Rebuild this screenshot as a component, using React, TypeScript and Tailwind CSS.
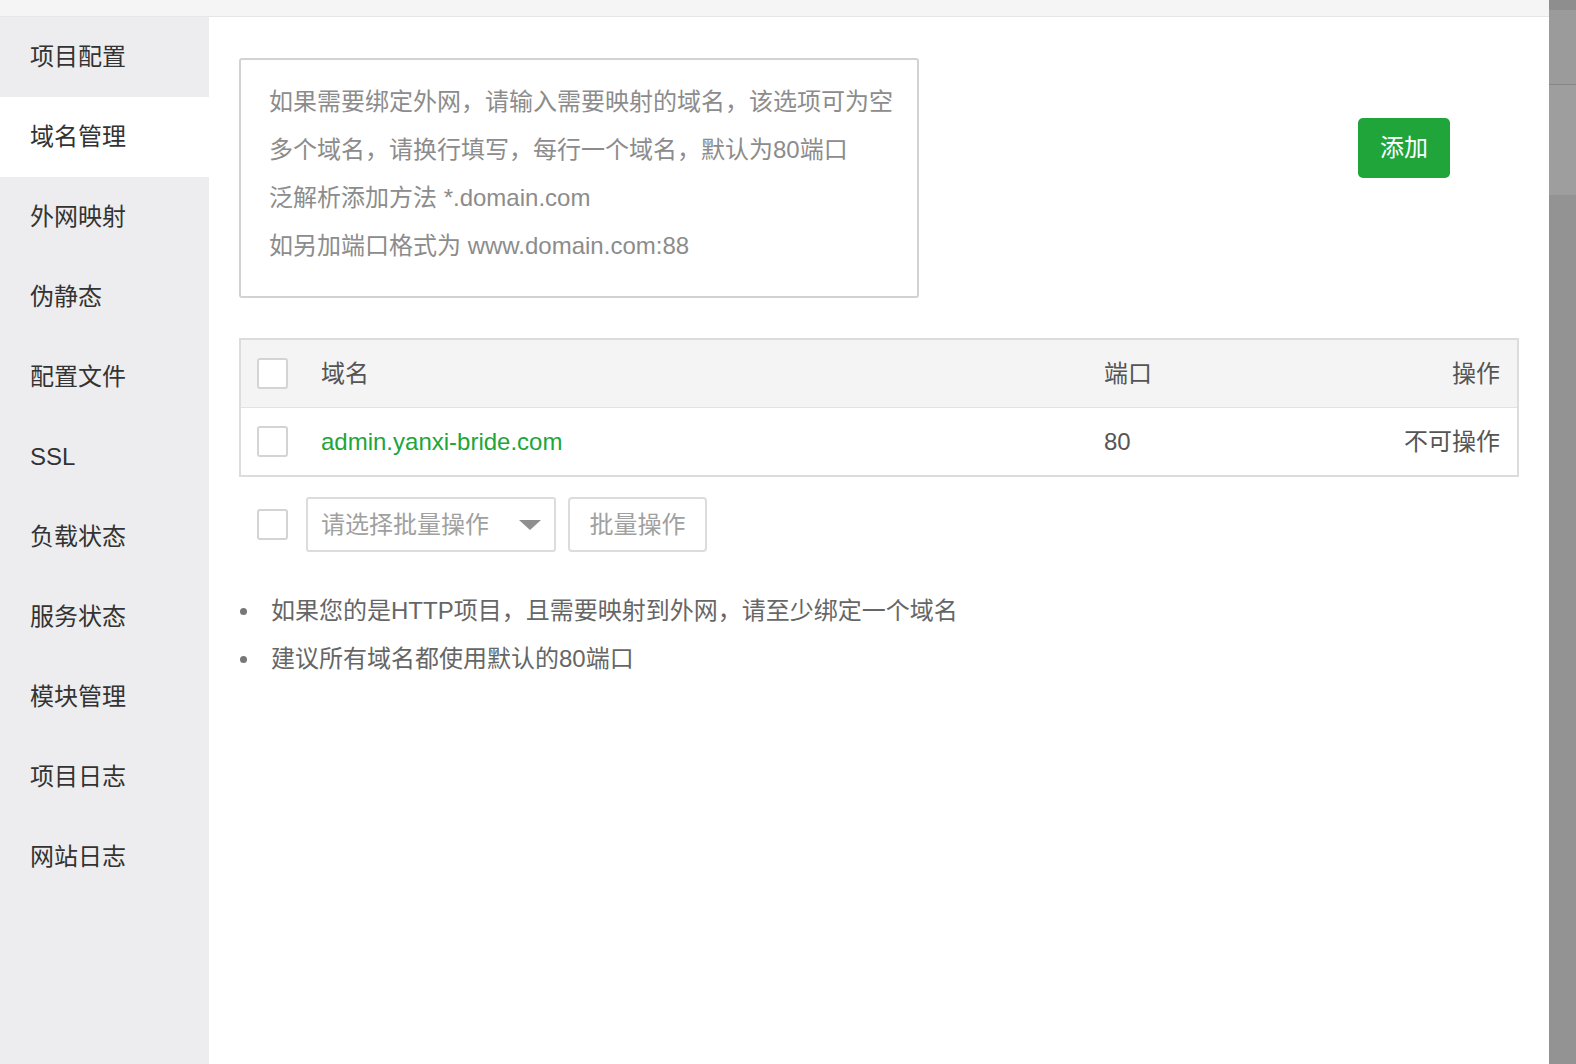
const menu = [
  '项目配置',
  '域名管理',
  '外网映射',
  '伪静态',
  '配置文件',
  'SSL',
  '负载状态',
  '服务状态',
  '模块管理',
  '项目日志',
  '网站日志',
];

const font = "font-['Liberation_Sans','Noto_Sans_CJK_SC',sans-serif]";

function Checkbox() {
  return <span className="block w-[31px] h-[31px] rounded-[3px] border-2 border-[#d4d4d4] bg-white" />;
}

export default function App() {
  return (
    <div className={`w-[1576px] h-[1064px] flex overflow-hidden bg-white ${font}`}>
      <div className="w-[1549px] flex flex-col">
        {/* top strip */}
        <div className="h-[17px] bg-[#f5f5f5] border-b border-[#e6e6e6]" />

        <div className="flex flex-1">
          {/* Sidebar */}
          <div className="w-[209px] bg-[#ededef] flex flex-col">
            {menu.map((item) => (
              <div
                key={item}
                className={`h-[80px] flex items-center pl-[30px] text-[24px] text-[#333] ${
                  item === '域名管理' ? 'bg-white' : ''
                }`}
              >
                {item}
              </div>
            ))}
          </div>

          {/* Main */}
          <div className="flex-1 pl-[30px] pr-[30px] pt-[41px]">
            <div className="flex items-start">
              <div className="w-[680px] h-[240px] overflow-hidden whitespace-nowrap border-2 border-[#d2d2d2] rounded-[3px] pt-[18px] pl-[28px] pr-[10px] text-[24px] leading-[48px] text-[#8c8c8c]">
                <div>如果需要绑定外网，请输入需要映射的域名，该选项可为空</div>
                <div>多个域名，请换行填写，每行一个域名，默认为80端口</div>
                <div>泛解析添加方法 *.domain.com</div>
                <div>如另加端口格式为 www.domain.com:88</div>
              </div>
              <button className="ml-auto mr-[69px] mt-[60px] w-[92px] h-[60px] rounded-[5px] bg-[#20a53a] text-white text-[24px]">
                添加
              </button>
            </div>

            {/* Table */}
            <div className="mt-[40px] border-2 border-[#dcdcdc]">
              <div className="h-[68px] bg-[#f4f4f4] border-b border-[#e2e2e2] flex items-center pl-[16px] pr-[17px] text-[24px] text-[#555]">
                <Checkbox />
                <span className="ml-[33px] flex-1">域名</span>
                <span className="w-[196px]">端口</span>
                <span className="w-[200px] text-right">操作</span>
              </div>
              <div className="h-[67px] flex items-center pl-[16px] pr-[17px] text-[24px] text-[#555]">
                <Checkbox />
                <span className="ml-[33px] flex-1 text-[#20a53a]">admin.yanxi-bride.com</span>
                <span className="w-[196px]">80</span>
                <span className="w-[200px] text-right">不可操作</span>
              </div>
            </div>

            {/* Batch controls */}
            <div className="mt-[20px] flex items-center pl-[18px]">
              <Checkbox />
              <div className="ml-[18px] w-[250px] h-[55px] border-2 border-[#dcdcdc] rounded-[3px] flex items-center pl-[13px] pr-[12px] text-[24px] text-[#a0a0a0]">
                <span>请选择批量操作</span>
                <svg className="ml-auto" width="24" height="12" viewBox="0 0 24 12">
                  <path d="M1 1h22L12 11z" fill="#8f8f8f" />
                </svg>
              </div>
              <button className="ml-[12px] w-[139px] h-[55px] border-2 border-[#dcdcdc] rounded-[4px] text-[24px] text-[#a0a0a0]">
                批量操作
              </button>
            </div>

            {/* Tips */}
            <ul className="mt-[35px] text-[24px] leading-[48px] text-[#666]">
              <li className="flex items-center">
                <span className="ml-[1px] w-[7px] h-[7px] rounded-full bg-[#777]" />
                <span className="ml-[24px]">如果您的是HTTP项目，且需要映射到外网，请至少绑定一个域名</span>
              </li>
              <li className="flex items-center">
                <span className="ml-[1px] w-[7px] h-[7px] rounded-full bg-[#777]" />
                <span className="ml-[24px]">建议所有域名都使用默认的80端口</span>
              </li>
            </ul>
          </div>
        </div>
      </div>

      {/* right overlay strip */}
      <div className="flex-1 flex flex-col">
        <div className="h-[10px] bg-[#8e8e8e]" />
        <div className="h-[75px] bg-[#9b9b9b] border-b border-[#858585]" />
        <div className="h-[110px] bg-[#9e9e9e]" />
        <div className="flex-1 bg-[#939393]" />
      </div>
    </div>
  );
}
